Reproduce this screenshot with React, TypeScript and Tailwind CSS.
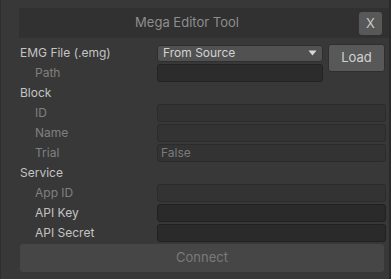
import React from "react";

const font = { fontFamily: "Inter, 'Noto Sans', sans-serif" };

function Label({ children, indent, dim }: { children: React.ReactNode; indent?: boolean; dim?: boolean }) {
  return (
    <div
      className={`w-[137px] shrink-0 text-[12px] leading-none ${indent ? "pl-[15px]" : ""} ${dim ? "text-[#808080]" : "text-[#c4c4c4]"}`}
    >
      {children}
    </div>
  );
}

function Field({ text, disabled }: { text?: string; disabled?: boolean }) {
  return (
    <div
      className={`h-[18px] flex-1 rounded-[3px] border px-[3px] flex items-center text-[12px] ${
        disabled ? "bg-[#333333] border-[#2b2b2b] text-[#7a7a7a]" : "bg-[#2a2a2a] border-[#212121] text-[#c4c4c4]"
      }`}
    >
      {text}
    </div>
  );
}

function Row({ children }: { children: React.ReactNode }) {
  return <div className="h-[20px] flex items-center">{children}</div>;
}

export default function App() {
  return (
    <div
      className="w-[391px] h-[279px] bg-[#383838] border-l border-l-[#2f2f2f] border-r-2 border-r-[#2a2a2a] overflow-hidden"
      style={font}
    >
      <div className="ml-[18px] mt-[8px] h-[30px] bg-[#313131] relative flex items-center justify-center pr-[34px]">
        <span className="text-[13px] text-[#8e8e8e]">Mega Editor Tool</span>
        <button className="absolute right-[7px] top-[4px] w-[23px] h-[23px] rounded-[3px] bg-[#585858] text-[#c8c8c8] text-[13px] flex items-center justify-center">
          X
        </button>
      </div>
      <div className="pl-[19px] pr-[3px] pt-[5px]">
        <div className="flex items-start">
          <div className="w-[303px] flex flex-col">
            <Row>
              <Label>EMG File (.emg)</Label>
              <div className="h-[17px] flex-1 rounded-[3px] bg-[#515151] border border-[#2e2e2e] flex items-center justify-between pl-[5px] pr-[5px] text-[12px] text-[#d2d2d2]">
                <span>From Source</span>
                <svg width="9" height="6" viewBox="0 0 9 6">
                  <path d="M0.5 0.5 L8.5 0.5 L4.5 5.5 Z" fill="#d8d8d8" />
                </svg>
              </div>
            </Row>
            <Row>
              <Label indent dim>
                Path
              </Label>
              <div className="h-[18px] flex-1 rounded-[3px] bg-[#2c2c2c] border border-[#232323]" />
            </Row>
          </div>
          <button className="ml-[5px] mt-[1px] w-[57px] h-[28px] rounded-[3px] bg-[#585858] border border-[#2f2f2f] text-[13px] text-[#d2d2d2]">
            Load
          </button>
        </div>
        <Row>
          <Label>Block</Label>
        </Row>
        <Row>
          <Label indent dim>ID</Label>
          <Field disabled />
        </Row>
        <Row>
          <Label indent dim>Name</Label>
          <Field disabled />
        </Row>
        <Row>
          <Label indent dim>Trial</Label>
          <Field disabled text="False" />
        </Row>
        <Row>
          <Label>Service</Label>
        </Row>
        <Row>
          <Label indent dim>App ID</Label>
          <Field disabled />
        </Row>
        <Row>
          <Label indent>API Key</Label>
          <Field />
        </Row>
        <Row>
          <Label indent>API Secret</Label>
          <Field />
        </Row>
        <div className="mt-[1px] mr-[2px] h-[28px] rounded-[3px] bg-[#464646] flex items-center justify-center text-[13px] text-[#7a7a7a]">
          Connect
        </div>
      </div>
    </div>
  );
}
